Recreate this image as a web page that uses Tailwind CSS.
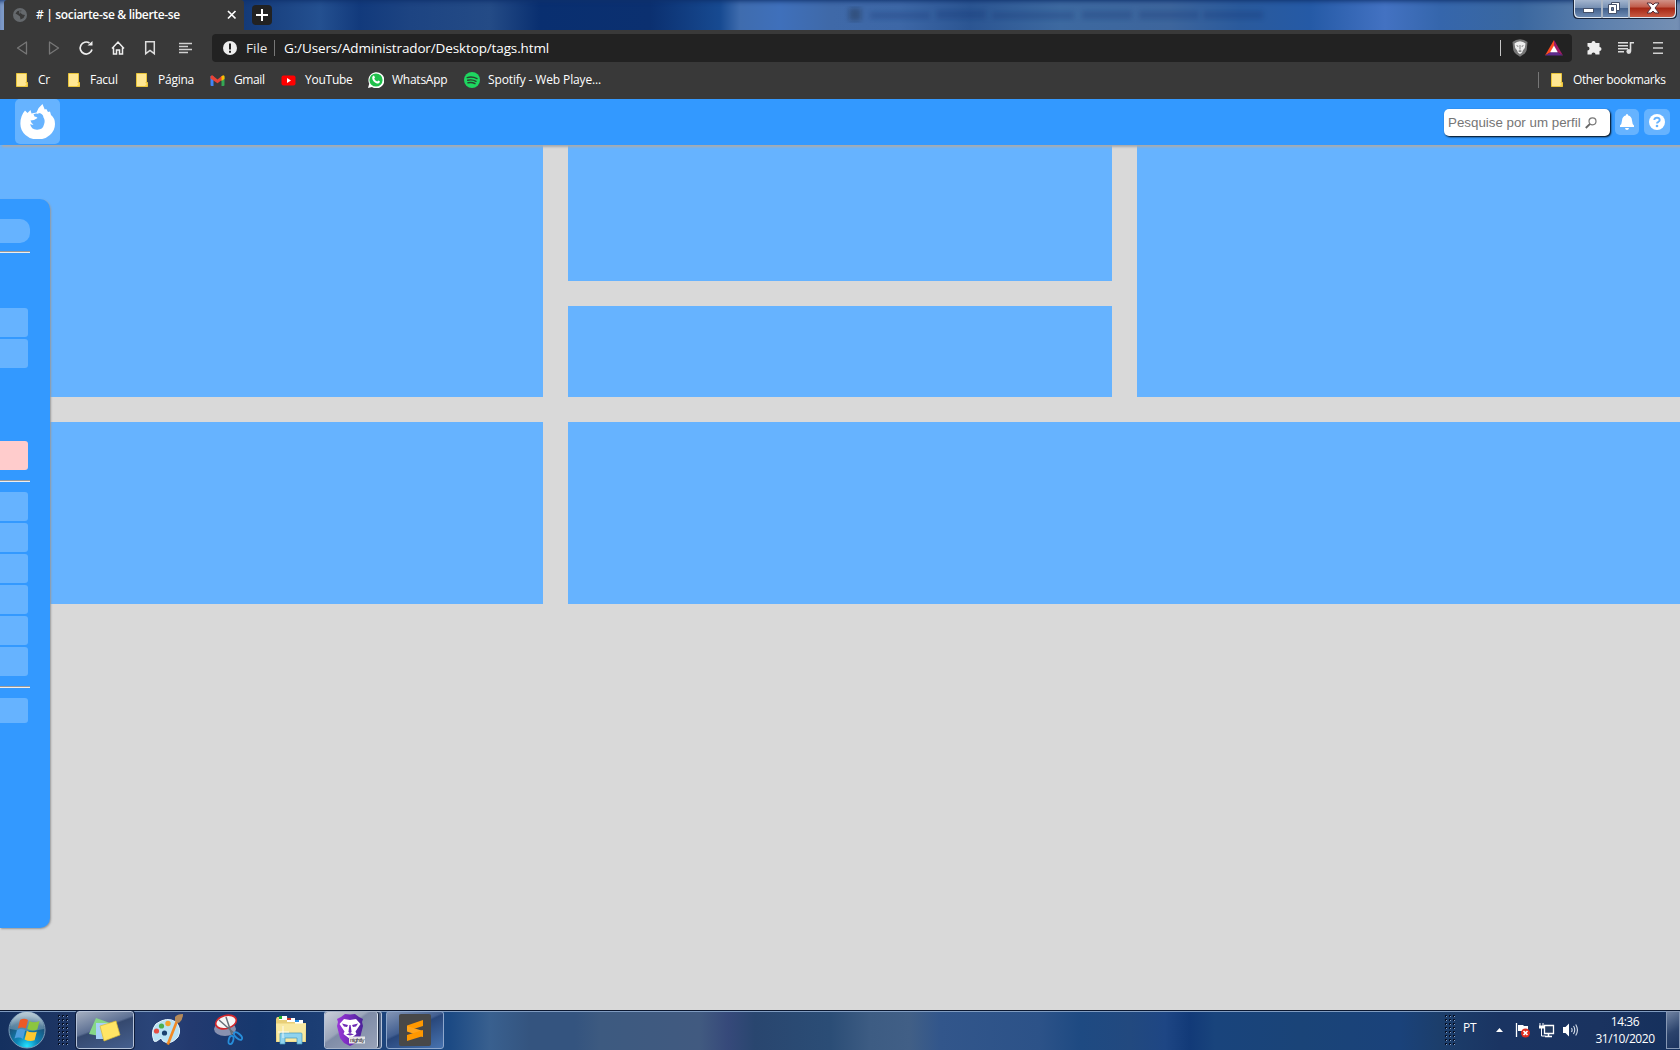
<!DOCTYPE html>
<html lang="pt">
<head>
<meta charset="utf-8">
<title># | sociarte-se &amp; liberte-se</title>
<script src="https://cdn.jsdelivr.net/npm/@tailwindcss/browser@4"></script>
</head>
<body class="w-[1680px] h-[1050px] overflow-hidden flex flex-col bg-[#d9d9d9] font-['Open_Sans','Noto_Sans',sans-serif] text-white">
<svg class="absolute w-0 h-0">
  <defs>
    <pattern id="dots" width="4" height="4" patternUnits="userSpaceOnUse"><rect width="2" height="2" fill="#050e22"/><rect x="1" y="1" width="1" height="1" fill="#8ba3c8"/></pattern>
    <symbol id="folder" viewBox="0 0 12 14"><path d="M.5.5h10v9h1v4H.5z" fill="#ffe793" stroke="#e8c43a"/><path d="M9 9.500h2.500v4H9z" fill="#f5c93a"/><path d="M9.800 10v2.500" stroke="#fff0b0"/></symbol>
  </defs>
</svg>

<!-- title bar -->
<header class="h-[30px] shrink-0 flex items-stretch pl-1 pr-px shadow-[inset_0_4px_5px_-3px_#0f2f6a] bg-[linear-gradient(90deg,#7d9ac8_0,#7d9ac8_4px,#143a78_245px,#245090_320px,#123a7c_360px,#1d4482_410px,#244b86_490px,#092f70_540px,#0b3070_650px,#174a91_720px,#3f6cae_740px,#3f70bb_780px,#3f69a8_830px,#3d67a6_900px,#2b5592_970px,#3d69a0_1060px,#3d659c_1170px,#2a5a9c_1240px,#255aa6_1310px,#4372c2_1385px,#3566ac_1440px,#3a679f_1520px,#5d80ad_1600px,#7590b4_1680px)]">
  <div class="w-60 flex items-center pl-[9px] bg-[#393939] rounded-t-[3px]">
    <svg class="w-[14px] h-[14px]" viewBox="0 0 14 14"><circle cx="7" cy="7" r="7" fill="#65696d"/><path d="M2.500 5.500 4.500 3l4-.5-1 2.500 2 1.500 2.500.5-1.500 3-3 1.500-.5-3-2-1.500z" fill="#393939"/><path d="M6 3 8.500 3.500 6.500 6z" fill="#65696d"/></svg>
    <span class="ml-[9px] w-[187px] mt-[-1px] text-[12px] font-semibold tracking-[-0.33px] whitespace-nowrap"># | sociarte-se &amp; liberte-se</span>
    <svg class="w-[10px] h-[10px] ml-1" viewBox="0 0 10 10"><path d="m1 1 7.500 7.500M8.500 1 1 8.500" stroke="#fff" stroke-width="1.700"/></svg>
  </div>
  <div class="ml-2 mt-[5px] w-5 h-5 rounded bg-[#222] flex items-center justify-center"><svg class="w-3 h-3" viewBox="0 0 12 12"><path d="M6 0v12M0 6h12" stroke="#fff" stroke-width="2"/></svg></div>
  <div class="flex-1 flex items-center justify-end">
    <svg class="w-[500px] h-[20px] mr-[258px] opacity-25" viewBox="0 0 500 20"><defs><filter id="soft"><feGaussianBlur stdDeviation="2.500"/></filter></defs><g filter="url(#soft)" fill="#0b2e6e"><rect x="34" y="3" width="12" height="13" fill="#111"/><path d="M55 7h60v7H55zm66-2h50v9h-50zm56 2h82v7h-82zm90-1h50v8h-50zm57 0h60v8h-60zm64 0h60v8h-60z"/></g></svg>
  </div>
  <svg class="w-[106px] h-[19px] shrink-0" viewBox="0 0 106 19">
    <defs><linearGradient id="glass" x2="0" y2="1"><stop stop-color="#a9bad2"/><stop offset=".48" stop-color="#7790b3"/><stop offset=".5" stop-color="#415f8b"/><stop offset="1" stop-color="#6c8ab3"/></linearGradient>
    <linearGradient id="redglass" x2="0" y2="1"><stop stop-color="#d39a91"/><stop offset=".45" stop-color="#c05b4a"/><stop offset=".5" stop-color="#a52614"/><stop offset="1" stop-color="#c85a42"/></linearGradient></defs>
    <path d="M0-1h104v15q0 5-5 5H5q-5 0-5-5z" fill="#17243b"/><path d="M1-1h102v14q0 5-5 5H6q-5 0-5-5z" fill="#dce5f0"/>
    <path d="M2-1h26v18H7q-5 0-5-5zM30-1h25v18H30z" fill="url(#glass)"/><path d="M57-1h45v13q0 5-5 5H57z" fill="url(#redglass)"/>
    <path d="M29 0v18M56 0v18" stroke="#35455e" stroke-width=".6"/>
    <rect x="10.500" y="8.500" width="10" height="4" fill="#fff" stroke="#45516a"/>
    <path d="M38.500 2.500h8v8h-8z" fill="#fff" stroke="#45516a"/><path d="M35.500 4.500h8v9h-8z" fill="#fff" stroke="#45516a"/><path d="M38.500 7.500h2v3h-2z" fill="#647ba0" stroke="#45516a"/>
    <path d="M74 3h4l2 2 2-2h4l-4 5 4 5h-4l-2-2-2 2h-4l4-5z" fill="#fff" stroke="#55303a"/>
  </svg>
</header>

<!-- navigation -->
<nav class="h-9 shrink-0 bg-[#393939] flex items-center pl-1.5 text-[13px]">
  <svg class="w-8 h-4" viewBox="0 0 32 16"><path d="M20.500 2v12L11.500 8z" fill="none" stroke="#777" stroke-width="1.300" stroke-linejoin="round"/></svg>
  <svg class="w-8 h-4" viewBox="0 0 32 16"><path d="M11.500 2v12l9-6z" fill="none" stroke="#777" stroke-width="1.300" stroke-linejoin="round"/></svg>
  <svg class="w-8 h-4" viewBox="0 0 32 16"><path d="M19.500 3A6 6 0 1 0 22 9.500" fill="none" stroke="#eee" stroke-width="1.700"/><path d="M17.500 5.500h5V1z" fill="#eee"/></svg>
  <svg class="w-8 h-4" viewBox="0 0 32 16"><path d="M10 8.500 16 2l6 6.500M11.500 7.500V14h3v-4h3v4h3V7.500" fill="none" stroke="#eee" stroke-width="1.500"/></svg>
  <svg class="w-8 h-4" viewBox="0 0 32 16"><path d="M11.700 1.700h8.600v12L16 10.500l-4.300 3.200z" fill="none" stroke="#ddd" stroke-width="1.500"/></svg>
  <svg class="w-[38px] h-4" viewBox="0 0 38 16"><path d="M13 3.500h13M13 6.500h9M13 9.500h13M13 12.500h9" stroke="#d0d0d0" stroke-width="1.500"/></svg>
  <div class="ml-2 w-[1360px] h-7 bg-[#222] rounded flex items-center pl-[11px]">
    <svg class="w-[14px] h-[14px]" viewBox="0 0 14 14"><circle cx="7" cy="7" r="7" fill="#eee"/><path d="M6 2.500h2v6H6zM6 9.700h2v2H6z" fill="#222"/></svg>
    <span class="ml-[9px] w-7 text-[#e4e4e4] text-[13.500px]">File</span>
    <span class="w-px h-4 bg-[#777]"></span>
    <span class="ml-[9px] text-[13.500px] tracking-[-0.13px] whitespace-nowrap">G:/Users/Administrador/Desktop/tags.html</span>
    <span class="ml-auto w-px h-4 bg-[#c5c5c5]"></span>
    <svg class="ml-[11px] w-4 h-[18px]" viewBox="0 0 16 18"><path d="m4 1 4-.800L12 1l3.500 2-.800 8q-.5 2.500-2.700 4L8 17.800 4 15q-2.200-1.500-2.700-4L.5 3z" fill="#777"/><path d="m5 3 3-.8L11 3l2.500 1.500L12.800 9 11 11.200l-1 2.500-2 1.300-2-1.300-1-2.500L3.200 9 2.500 4.500z" fill="#eee"/><path d="m4 6 2.500 1L6 8zm8 0L9.500 7 10 8zM7.600 6h.8v4.500h-.8zM6 12l2 1 2-1-2-.8z" fill="#666"/></svg>
    <svg class="ml-[17px] mr-[9px] w-[18px] h-[16px]" viewBox="0 0 18 16"><path d="M9 0 0 15.500 6 12 9 6z" fill="#ff4b20"/><path d="m9 0 9 15.500-6-3.500L9 6z" fill="#a01b68"/><path d="M0 15.500h18L12 12H6z" fill="#5f2b8d"/><path d="m9 5.500 3.800 6.700H5.200z" fill="#fff"/></svg>
  </div>
  <svg class="ml-3.5 w-4 h-4" viewBox="0 0 16 16"><path d="M1.500 3h4a2 2 0 1 1 4 0h4v4a2 2 0 0 1 0 4v3.500h-4a2 2 0 0 0-4 0h-4v-4a2 2 0 0 0 0-4z" fill="#eee"/></svg>
  <svg class="ml-4 w-4 h-4" viewBox="0 0 16 16"><path d="M0 2.800h10M0 5.800h10M0 8.800h10M0 11.800h6" stroke="#ddd" stroke-width="1.500"/><path d="M12.500 2v9M12 2.700h4" stroke="#ddd" stroke-width="1.600"/><circle cx="10.800" cy="11.500" r="2.400" fill="#ddd"/></svg>
  <svg class="ml-[19px] w-[10px] h-4" viewBox="0 0 10 16"><path d="M0 2.800h10M0 8h10M0 13.200h10" stroke="#d0d0d0" stroke-width="1.600"/></svg>
</nav>

<!-- bookmarks -->
<nav class="h-[33px] shrink-0 bg-[#393939] flex items-center pl-4 pb-[5px] text-[12px] tracking-[-0.25px] whitespace-nowrap">
  <div class="w-[52px] flex items-center"><svg class="w-3 h-3.5 mr-2.5"><use href="#folder"/></svg>Cr</div>
  <div class="w-[68px] flex items-center"><svg class="w-3 h-3.5 mr-2.5"><use href="#folder"/></svg>Facul</div>
  <div class="w-[74px] flex items-center"><svg class="w-3 h-3.5 mr-2.5"><use href="#folder"/></svg>Página</div>
  <div class="w-[71px] flex items-center tracking-[-0.4px]"><svg class="w-[15px] h-[11px] mr-[9px]" viewBox="0 0 15 11"><path d="M.5 1h3v10H1.500q-1 0-1-1z" fill="#4285f4"/><path d="M11.500 1h3v9q0 1-1 1h-2z" fill="#34a853"/><path d="m.5 1.500 1.500-1.500 5.500 4.500L12 .800v4L7.500 8.300.5 3.500z" fill="#ea4335"/><path d="M11.500 1.200Q14.500-1 14.500 2v2l-3 2z" fill="#fbbc04"/></svg>Gmail</div>
  <div class="w-[87px] flex items-center"><svg class="w-[15px] h-[11px] mr-[9px]" viewBox="0 0 15 11"><rect x=".5" y=".5" width="14" height="10" rx="2" fill="#f00"/><path d="m6 3 4 2.500L6 8z" fill="#fff"/></svg>YouTube</div>
  <div class="w-[96px] flex items-center"><svg class="w-4 h-4 mr-2" viewBox="0 0 16 16"><path d="m0 16 1.200-4.300A8 8 0 1 1 4 14.900z" fill="#fff"/><circle cx="8" cy="8" r="6.600" fill="#20c04c"/><path d="M5 4q1-1 1.500.5l.5 1-.8 1.200q1 2 3 2.800l1.200-1q2 .7 1.500 1.500-1 2-3 1.500Q4.500 9.500 4.200 6 4.200 4.700 5 4z" fill="#fff"/></svg>WhatsApp</div>
  <div class="flex items-center tracking-[-0.13px]"><svg class="w-4 h-4 mr-2" viewBox="0 0 16 16"><circle cx="8" cy="8" r="8" fill="#1ed760"/><path d="M3.200 5.600q5-1.500 9.800 1M3.700 8.300q4.500-1.200 8.300 1M4 10.800q4-.9 7 .8" fill="none" stroke="#28442f" stroke-width="1.400" stroke-linecap="round"/></svg>Spotify - Web Playe...</div>
  <span class="ml-auto w-px h-4 bg-[#777]"></span>
  <div class="ml-3 w-[129px] flex items-center tracking-[-0.4px]"><svg class="w-3 h-3.5 mr-2.5"><use href="#folder"/></svg>Other bookmarks</div>
</nav>

<!-- page header -->
<div class="relative z-20 h-[46px] shrink-0 bg-[#3399ff] shadow-[2px_2px_2px_#aaaaaa] flex items-start pl-[15px] pr-[10px]">
  <div class="w-[45px] h-[45px] rounded-[5px] bg-[#66b3ff] flex items-center justify-center">
    <svg class="w-[35px] h-[35px]" viewBox="0 0 35 35"><path d="M5 6.500 7.500 9l3-3 1 3.500 5-1Q18.500 3 22.500 0l2.200 5.500 1.600-.5L28 8l2-.5 1 3.500Q35 14 35 20a17.300 15.500 0 0 1-34.600 0Q.2 12 5 6.500z" fill="#fff"/><path d="M13.500 10.200q3-1.200 5.500 0l-1-1.200q5 0 5.500 4.500 2 3 .5 7a7 6.500 0 0 1-13.800-.5q1.500 1 3.300.5-2.500-1.500-3-4l3.500-.5 3.500-2q-.5-1.500-3-1.500z" fill="#66b3ff"/></svg>
  </div>
  <div class="ml-auto mt-[10px] w-[166px] h-[27px] rounded-[5px] bg-white shadow-[1px_1px_2px_#000] flex items-center pl-1 font-['Liberation_Sans',sans-serif] text-[13.333px] text-[#757575]">
    <span class="w-[137px] whitespace-nowrap">Pesquise por um perfil</span>
    <svg class="w-3 h-3" viewBox="0 0 12 12"><circle cx="7.500" cy="4.300" r="3.500" fill="none" stroke="#777" stroke-width="1.200"/><path d="M5 6.800.8 11" stroke="#666" stroke-width="1.900"/></svg>
  </div>
  <div class="ml-[5px] mt-[10px] w-6 h-[26px] rounded-[5px] bg-[#66b3ff] flex items-center justify-center"><svg class="w-[14px] h-4" viewBox="0 0 14 16"><path d="M7 0q1.200 0 1.200 1.500 3.500.8 3.800 5 .2 3.500 2 5v1.500H0v-1.500q1.800-1.500 2-5 .3-4.200 3.800-5Q5.800 0 7 0zM5 14h4q-.3 2-2 2t-2-2z" fill="#fff"/></svg></div>
  <div class="ml-[5px] mt-[10px] w-[26px] h-[26px] rounded-[5px] bg-[#66b3ff] flex items-center justify-center"><svg class="w-4 h-4" viewBox="0 0 16 16"><circle cx="8" cy="8" r="8" fill="#fff"/><path d="M5.300 6Q5.500 3.800 8 3.800T10.700 6Q10.700 7 9.400 7.800 8 8.500 8 9.500" fill="none" stroke="#66b3ff" stroke-width="1.900"/><circle cx="8" cy="12" r="1.300" fill="#66b3ff"/></svg></div>
</div>

<!-- content -->
<main class="relative flex-1 min-h-0">
  <div class="grid grid-cols-[543px_544px_543px] grid-rows-[136px_91px_182px] gap-[25px]">
    <div class="row-span-2 bg-[#66b3ff]"></div>
    <div class="bg-[#66b3ff]"></div>
    <div class="row-span-2 bg-[#66b3ff]"></div>
    <div class="bg-[#66b3ff]"></div>
    <div class="bg-[#66b3ff]"></div>
    <div class="col-span-2 bg-[#66b3ff]"></div>
  </div>
  <!-- drawer over the grid, mostly pushed off the left edge -->
  <aside class="absolute left-0 top-[54px] w-[50px] h-[729px] bg-[#3399ff] rounded-r-[10px] shadow-[1px_1px_2px_#999999] pt-5 flex flex-col">
    <div class="w-[30px] h-6 rounded-r-[10px] bg-[#66b3ff]"></div>
    <hr class="mt-2 w-[30px] h-0.5 border-0 border-t border-t-[#9a9a9a] bg-[#eee]">
    <div class="mt-[55px] w-7 h-[29px] rounded-r-[3px] bg-[#66b3ff]"></div>
    <div class="mt-0.5 w-7 h-[29px] rounded-r-[3px] bg-[#66b3ff]"></div>
    <div class="mt-[73px] w-7 h-[29px] rounded-r-[3px] bg-[#ffcccc]"></div>
    <hr class="mt-2.5 w-[30px] h-0.5 border-0 border-t border-t-[#9a9a9a] bg-[#eee]">
    <div class="mt-2.5 flex flex-col gap-0.5">
      <div class="w-7 h-[29px] rounded-r-[3px] bg-[#66b3ff]"></div>
      <div class="w-7 h-[29px] rounded-r-[3px] bg-[#66b3ff]"></div>
      <div class="w-7 h-[29px] rounded-r-[3px] bg-[#66b3ff]"></div>
      <div class="w-7 h-[29px] rounded-r-[3px] bg-[#66b3ff]"></div>
      <div class="w-7 h-[29px] rounded-r-[3px] bg-[#66b3ff]"></div>
      <div class="w-7 h-[29px] rounded-r-[3px] bg-[#66b3ff]"></div>
    </div>
    <hr class="mt-2.5 w-[30px] h-0.5 border-0 border-t border-t-[#9a9a9a] bg-[#eee]">
    <div class="mt-2.5 w-7 h-[25px] rounded-r-[3px] bg-[#66b3ff]"></div>
  </aside>
</main>

<!-- taskbar -->
<footer class="h-10 shrink-0 shadow-[inset_0_1px_0_#0a1730,inset_0_2px_0_#7f9bc0] flex items-center pl-2 bg-[linear-gradient(90deg,#14305f_0,#1d3563_60px,#2a4478_150px,#233a70_190px,#16386e_260px,#1d3f75_330px,#1c4a84_450px,#39608f_490px,#34547f_530px,#34547f_575px,#3d5a80_600px,#415a80_700px,#36497a_728px,#29466f_755px,#2b4d76_830px,#3d5c83_870px,#415f86_910px,#32568b_940px,#2c5288_1040px,#1e4a82_1080px,#22497f_1130px,#1e4684_1165px,#123a78_1190px,#19447c_1215px,#1a4478_1300px,#1a427a_1400px,#1c3e6b_1440px,#1a3462_1500px,#1a3360_1600px,#15305c_1680px)]">
  <svg class="w-[38px] h-[38px]" viewBox="0 0 38 38"><defs><radialGradient id="orb" cx=".5" cy=".95" r=".85"><stop stop-color="#25e4ff"/><stop offset=".35" stop-color="#0d86b8"/><stop offset=".8" stop-color="#1c5078"/><stop offset="1" stop-color="#6b8fa8"/></radialGradient><linearGradient id="shine" x2="0" y2="1"><stop stop-color="#dce7ec" stop-opacity=".7"/><stop offset="1" stop-color="#8fb0c4" stop-opacity=".4"/></linearGradient></defs>
    <circle cx="19" cy="19" r="18" fill="url(#orb)" stroke="#7c9cb8"/><path d="M2 18a17 17 0 0 1 34 0q-17 4-34 0z" fill="url(#shine)"/>
    <path d="M12 9q4-2.500 8 0l-2.200 8.500q-4-2-8 0z" fill="#ec5a26"/><path d="M21.500 10q4 2.500 10 0l-2.200 8.500q-5 2-10-.5z" fill="#8cc63f"/><path d="M9 19q4-2 8.300 0L15 28q-4-2.500-8.500-.5z" fill="#4d9ede"/><path d="M18.800 19.700q4 2.500 10 1l-2.200 8.500q-5 2-10-.8z" fill="#fdc82f"/></svg>
  <svg class="ml-3 w-[10px] h-[31px]" viewBox="0 0 10 31"><rect width="10" height="31" fill="url(#dots)"/></svg>
  <div class="ml-2 w-[58px] h-[38px] rounded-[3px] border border-[#b5c2d8] outline outline-[#0d1c3b] bg-[linear-gradient(160deg,#a5afc0_0%,#5e7194_42%,#35496f_46%,#46608f_100%)] flex items-center justify-center">
    <svg class="w-8 h-8" viewBox="0 0 32 32"><path d="m7 4 14 5-5 14L0 20z" fill="#86d787"/><path d="M7 9h14v16H7z" fill="#a7d0f7"/><path d="m11 12 16-5 4 14-16 6z" fill="#ffe565" stroke="#d8ba35" stroke-width=".7"/></svg>
  </div>
  <svg class="ml-[17px] w-8 h-8" viewBox="0 0 32 32"><path d="M3 27Q-1 17 5 10 16 2 25 8q6 7 2 15-8 9-15 4l-2-3-4 3q-2 1-3 0z" fill="#b9e2f4" stroke="#e9f7ff"/><circle cx="5.500" cy="17" r="2.600" fill="#e54d42"/><circle cx="10.500" cy="12" r="2.600" fill="#4caf50"/><circle cx="17" cy="9.500" r="2.700" fill="#f5a32c"/><circle cx="13.500" cy="19" r="2.600" fill="#19406f"/><path d="m25 6 2 2-9 23-2.500-1z" fill="#f28a24"/><path d="M24 3q2-3 8-3 0 6-4 9l-4-2z" fill="#b58a5a"/></svg>
  <svg class="ml-[31px] w-8 h-8" viewBox="0 0 32 32"><ellipse cx="11" cy="15" rx="11" ry="7" fill="#8891b0"/><ellipse cx="12" cy="8" rx="10.500" ry="6.500" fill="#f7f7f7" stroke="#d3262b" stroke-width="1.600" transform="rotate(-15 12 8)"/><path d="m5 6 16 14M12 3l6 18" stroke="#666e78" stroke-width="1.500"/><ellipse cx="17" cy="26" rx="2.300" ry="4.200" fill="none" stroke="#278edb" stroke-width="1.800" transform="rotate(15 17 26)"/><ellipse cx="24" cy="22" rx="2.300" ry="5" fill="none" stroke="#278edb" stroke-width="1.800" transform="rotate(-48 24 22)"/></svg>
  <svg class="ml-[29px] w-8 h-8" viewBox="0 0 32 32"><path d="M2 3h10l1 3h10v3h8v19H1V5z" fill="#e8cf78"/><path d="M4 2h8v4H4z" fill="#fff"/><path d="M4 2h3v3H4z" fill="#1db32c"/><path d="M12 4h8v4h-8z" fill="#fff"/><path d="M12 4h4v2h-4z" fill="#d23a28"/><path d="M20 6h8v4h-8z" fill="#fff"/><path d="M20 6h4v2h-4z" fill="#298fe0"/><path d="M1 9.500h30l-1 18H2z" fill="#f8e9a2"/><path d="M6 19h20q1 0 1 1v10h-5v-6H10v6H5V20q0-1 1-1z" fill="#8fd3ee" stroke="#4499bd" stroke-width=".7"/><path d="M8 12v12M3 18h11" stroke="#fff" stroke-width=".8"/></svg>
  <div class="ml-[17px] w-[58px] h-[38px] rounded-[3px] border border-[#b5c2d8] bg-[#536789] flex">
    <div class="w-[53px] h-full rounded-[3px] border-r border-[#dce4ef] bg-[linear-gradient(145deg,#cbd0da_0%,#9ca6ba_40%,#7f8ca7_44%,#98a2b8_100%)] shadow-[1px_0_1px_#16243e] flex items-center pl-[11px]">
      <svg class="w-[32px] h-8 shrink-0" viewBox="0 0 32 32"><defs><linearGradient id="lion"><stop stop-color="#9a35d8"/><stop offset="1" stop-color="#4b2299"/></linearGradient></defs><path d="m9 0 5 .500L19 0l4 3 4 2-1 3 1 4-3 12-4 5-6 3-6-3-4-5L1 12l1-4-1-3 4-2z" fill="url(#lion)"/><path d="m8 5 6 1 6-1 4.500 5-5 7.500 1 2.500-6.500 5-6.500-5 1-2.500-5-7.500z" fill="#fff"/><path d="m6 9.500 6 1.500-1 2-3-.5zm16 0-6 1.500 1 2 3-.5zM13.400 11h1.200l1 7-1.600 1.200-1.600-1.200zM10 20.500l4-1.500 4 1.500-4 1z" fill="#6f2bb5"/><rect x="13" y="22.500" width="16" height="7" fill="#e5e5e5"/><text x="14" y="28" font-size="6" font-family="Liberation Sans" textLength="14.500" fill="#222">nightly</text></svg>
    </div>
  </div>
  <div class="ml-1 w-[58px] h-[38px] rounded-[3px] border border-[#8ea7cc] bg-[linear-gradient(155deg,#8395b5_0%,#425f91_42%,#29477b_46%,#4773b0_100%)] flex items-center justify-center">
    <svg class="w-8 h-8" viewBox="0 0 32 32"><rect width="32" height="32" rx="2" fill="#484848"/><path d="M8 11.500 24 6v6L8 17z" fill="#ff9800"/><path d="m8 12 16 5v6L8 17.500z" fill="#ffa41c"/><path d="m8 21 16-5v6L8 27z" fill="#ff9800"/></svg>
  </div>
  <svg class="ml-auto w-[10px] h-[31px]" viewBox="0 0 10 31"><rect width="10" height="31" fill="url(#dots)"/></svg>
  <span class="ml-2 w-[33px] text-[12px] tracking-[-0.2px] -mt-1">PT</span>
  <svg class="w-[7px] h-1" viewBox="0 0 7 4"><path d="M0 4 3.500 0 7 4z" fill="#fff"/></svg>
  <svg class="ml-[12px] w-4 h-4" viewBox="0 0 16 16"><path d="M1.500 1v14" stroke="#fff" stroke-width="1.300"/><path d="M3 3h5l1 1h4v6H8L7 9H3z" fill="#fff"/><circle cx="10.500" cy="11" r="4.500" fill="#e02c1d"/><path d="m8.500 9 4 4m0-4-4 4" stroke="#fff" stroke-width="1.600"/></svg>
  <svg class="ml-2 w-4 h-4" viewBox="0 0 16 16"><path d="M5.500 3.500h9v8h-9z" fill="#243b60" stroke="#fff" stroke-width="1.300"/><path d="M6 14.500h7M9.500 12v3" stroke="#fff" stroke-width="1.500"/><path d="M0 3.500h5v3H0z" fill="#fff"/><path d="M1 1v3M4 1v3M2.500 6v8h4" fill="none" stroke="#fff"/></svg>
  <svg class="ml-2 w-4 h-4" viewBox="0 0 16 16"><path d="M0 5h2.500L6 1.500v13L2.500 11H0z" fill="#fff"/><path d="M8.500 6q1.200 2 0 4M10.500 4q2.500 4 0 8M12.700 2.500q3.500 5.500 0 11" fill="none" stroke="#d8e0ec" stroke-width="1.100"/></svg>
  <div class="ml-[13px] w-[66px] text-center text-[12px] leading-[17px] tracking-[-0.45px] whitespace-nowrap">14:36<br>31/10/2020</div>
  <div class="ml-2 w-[14px] h-[38px] border border-[#8798b4] bg-[linear-gradient(150deg,#7083a2,#2b436c_55%,#1c345f)]"></div>
</footer>
</body>
</html>
